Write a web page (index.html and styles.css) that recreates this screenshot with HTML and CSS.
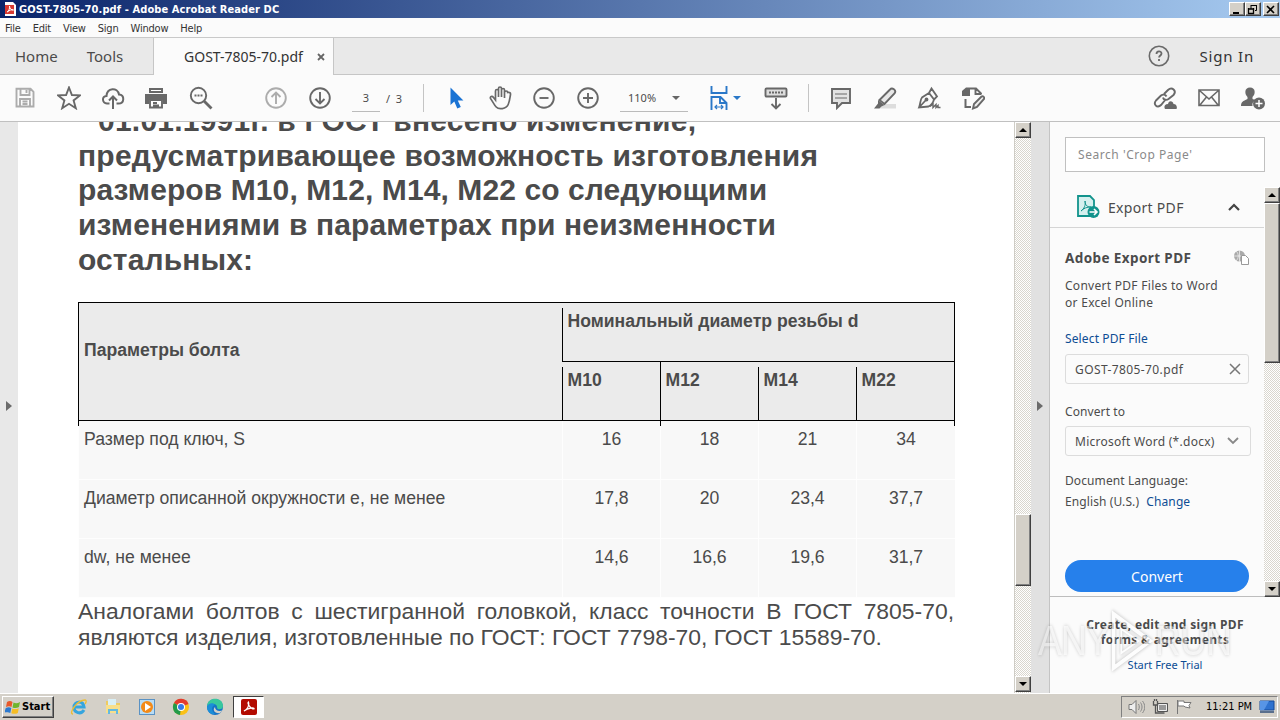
FILE: index.html
```html
<!DOCTYPE html>
<html lang="en">
<head>
  <meta charset="UTF-8" />
  <meta name="viewport" content="width=device-width, initial-scale=1.0" />
  <title>GOST-7805-70.pdf - Adobe Acrobat Reader DC</title>
  <link rel="stylesheet" href="styles.css">
</head>
<body>
  <header class="titlebar">
    <svg class="app-icon" width="13" height="14" viewBox="0 0 13 14"><path d="M1 0h8l3 3v11H1z" fill="#fff"/><path d="M1 3h9v9H1z" fill="#d93a32"/><path d="M3 10c2-1 3-4 2.500-6 0 3 2 4 4 4-2-.5-4 0-6 2" fill="none" stroke="#fff"/></svg>
    <span class="title">GOST-7805-70.pdf - Adobe Acrobat Reader DC</span>
    <div class="win-buttons">
      <button class="win"><svg width="13" height="11"><path d="M3 9h6" stroke="#000" stroke-width="2"/></svg></button>
      <button class="win"><svg width="13" height="11"><path d="M5 1.500h6M5 1v4M10.500 1v5.500H9" fill="none" stroke="#000"/><path d="M2 5h6M2.500 4v5.500h5V4" fill="none" stroke="#000" stroke-width="1.300"/></svg></button>
      <button class="win close"><svg width="13" height="11"><path d="M3 2l7 7M10 2L3 9" stroke="#000" stroke-width="1.600"/></svg></button>
    </div>
  </header>

  <nav class="menu">
    <span>File</span><span>Edit</span><span>View</span><span>Sign</span><span>Window</span><span>Help</span>
  </nav>

  <div class="tabs">
    <div class="tab-left"><span>Home</span><span>Tools</span></div>
    <div class="tab-active"><span>GOST-7805-70.pdf</span><svg width="8" height="8"><path d="M1 1l6 6M7 1L1 7" stroke="#666" stroke-width="1.800"/></svg></div>
    <div class="tab-right">
      <svg width="22" height="22" viewBox="0 0 22 22"><circle cx="11" cy="11" r="9.700" fill="none" stroke="#6a6a6a" stroke-width="1.600"/><path d="M8.500 9c0-3.500 5-3.300 5-.5 0 2-2.400 2-2.400 4M11 14v2" fill="none" stroke="#6a6a6a" stroke-width="1.800"/></svg>
      <span>Sign In</span>
    </div>
  </div>

  <div class="toolbar">
    <div class="tools files">
      <svg class="icon off" viewBox="0 0 24 24"><path d="M3.500 2.800h14l3 3v14.700h-17zM7.500 3v6h9V3M13.500 4v3M7 20v-7h10v7M9.500 15.500h5M9.500 18h5"/></svg>
      <svg class="icon" viewBox="0 0 24 24"><path d="M12 1.500l2.900 7.500 8 .4-6.300 5 2.200 7.800L12 17.800l-6.800 4.400 2.200-7.800-6.300-5 8-.4z"/></svg>
      <svg class="icon" viewBox="0 0 24 24"><path d="M8.500 17.500H6C1 17 .5 10.500 5.500 10 6 1.500 16.500 1 18 8.500c6 .5 5.500 9-.5 9h-2M12 23V11M8 14.500l4-4 4 4" stroke-width="2"/></svg>
      <svg class="icon" viewBox="1 0 24 24"><path class="solid" d="M5 2h14v5H5zM1 8h22v10h-4v-4H5v4H1z"/><path d="M6 14h12v7.500H6zM9 17h4M9 19.500h6" fill="#fff"/><path d="M6 3h12v3H6z" fill="#fff"/></svg>
      <svg class="icon" viewBox="0 0 24 24"><circle cx="9.500" cy="9.500" r="7.700"/><path d="M15 15l7.500 7.500" stroke-width="2.800"/><path d="M5.500 9.500h8" stroke-width="2" stroke-dasharray="2 1"/></svg>
    </div>
    <div class="tools pages">
      <svg class="icon off" viewBox="0 0 24 24"><circle cx="12" cy="12" r="9.800"/><path d="M12 18V7M7.500 11L12 6.500l4.500 4.500"/></svg>
      <svg class="icon" viewBox="0 0 24 24"><circle cx="12" cy="12" r="9.800"/><path d="M12 6v11M7.500 13l4.500 4.500 4.500-4.500"/></svg>
      <span class="page-no">3</span>
    </div>
    <span class="page-count">/&nbsp; 3</span>
    <i class="sep"></i>
    <div class="tools view">
      <svg class="icon" viewBox="0 0 24 24"><path d="M6.500 1.500v17.500l3.800-3.600 3 7 3.500-1.300-3-6.600h5.600z" fill="#1a73d4" stroke="none"/></svg>
      <svg class="icon" viewBox="0 0 24 24"><path stroke-width="1.700" d="M7.500 14V5c0-2 3-2 3 0v6-8.500c0-2 3-2 3 0V11 4c0-2 3-2 3 0v8-5.500c0-2 3.200-2 3.200 0v0c2-.5 3 .5 2.800 2-.5 3-.9 7-2.300 10-2 4.700-9.500 5.300-12 2.500-2-2-3.500-5.500-5.700-8.500-.8-2 1.600-3 3-1z"/></svg>
      <svg class="icon" viewBox="0 0 24 24"><circle cx="12" cy="12" r="9.800"/><path d="M7.500 12h9"/></svg>
      <svg class="icon" viewBox="0 0 24 24"><circle cx="12" cy="12" r="9.800"/><path d="M7 12h10M12 7v10"/></svg>
      <span class="zoom">110%<i class="caret"></i></span>
    </div>
    <svg class="icon fit" viewBox="0 0 24 24"><path d="M4.500 0v7h15V0M4.500 24V11h9l6 6v7M13 11v6h6"/><path d="M8 21h8M10 19l-2 2 2 2M14 19l2 2-2 2" stroke-width="1.200"/></svg>
    <i class="caret blue"></i>
    <svg class="icon keys" viewBox="0 0 24 24"><rect x="1.500" y="2.500" width="21" height="8" rx="1" fill="#ddd"/><path d="M5 6.500h14" stroke-dasharray="2 1"/><path d="M12 12v10M7.500 18l4.500 4.500 4.500-4.500"/></svg>
    <i class="sep"></i>
    <div class="tools edit">
      <svg class="icon" viewBox="0 0 24 24"><path d="M3 3h18v14h-8l-5 5v-5H3z" fill="#e2e2e2"/><path d="M6 8h12M6 12h12" stroke-width="1.200"/></svg>
      <svg class="icon" viewBox="0 0 24 24"><path d="M11 18h12v4.500H7z" fill="#ddd" stroke="none"/><path d="M6.500 14L17 3.500c2-2.500 7 .5 4.500 4L11.500 18l-5-4z" fill="#e7e7e7"/><path class="solid" d="M5 14l6.500 5-3 1.500-2 2H1l4-5z"/></svg>
      <svg class="icon" viewBox="0 0 24 24"><path d="M2 21.500C3.500 18 3 14 5 11.500L12 7l5 6.500c-1 3.500-3 6-5.500 7zM2 21.500l6.500-7M12 7l2.500-4.500 5.500 8-3 3" stroke-width="1.800"/><circle cx="9.500" cy="13.500" r="1"/><path d="M13 20.500l3-2.500v3.500l3-3v3l2-2v2h2.500" stroke-width="1.400"/></svg>
      <svg class="icon" viewBox="0 0 24 24"><path class="solid" d="M1 5l4-3.500h4V10H1z"/><path d="M9 2.500h6l5 5v1M14.500 3v5H20" /><path d="M4.500 13v8H10" stroke-width="2"/><path d="M12 22.500l1-4.500 7.500-7.500c1.500-1 3.500 1 2.500 2.500L16 21z" fill="#eee"/></svg>
    </div>
    <div class="share">
      <svg class="icon" viewBox="0 0 24 24"><path d="M11 8l4-4c4-4 9 1 5.500 5l-5 4c-2 1.500-5 1-5.500-1.500M13 13l-5 6c-4 4-8-1-5-4.500l5-5c2-1.500 4.500-1 5.500 1"/><path class="solid" d="M12 23c-2-4 2-5 3-5 1-4 5-3 5.500 0 3 0 4 3 3 5z"/></svg>
      <svg class="icon" viewBox="0 0 24 24"><path d="M2 4h20v15.500H2zM2.500 4.500L12 13l9.500-8.500M3 19l6.500-8M21 19l-6.500-8" stroke-width="1.600"/></svg>
      <svg class="icon" viewBox="0 0 24 24"><path class="solid" d="M9 1.500c6 0 5.500 7 2.500 9.500v2l3.500 1.500c-3 1-4 2.500-3.500 5.500H0c0-4 2-5 6.500-7v-2C3.500 8.500 3 1.500 9 1.500z"/><circle class="solid" cx="18" cy="17.500" r="6"/><path d="M18 14v7M14.500 17.500h7" stroke="#fff" stroke-width="1.500"/></svg>
    </div>
  </div>

  <main class="workspace">
    <aside class="left-rail"><i class="arrow"></i></aside>

    <article class="page">
      <h1>
        <span class="l1">01.01.1991г. в ГОСТ внесено изменение,</span>
        <span class="l2">предусматривающее возможность изготовления</span>
        <span class="l3">размеров М10, М12, М14, М22 со следующими</span>
        <span class="l4">изменениями в параметрах при неизменности</span>
        <span class="l5">остальных:</span>
      </h1>
      <div class="bolts">
        <div class="th params">Параметры болта</div>
        <div class="th diameter">Номинальный диаметр резьбы d</div>
        <div class="th short">М10</div>
        <div class="th full">М12</div>
        <div class="th short">М14</div>
        <div class="th short last">М22</div>
        <div class="td name">Размер под ключ, S</div><div class="td">16</div><div class="td">18</div><div class="td">21</div><div class="td">34</div>
        <div class="td name">Диаметр описанной окружности е, не менее</div><div class="td">17,8</div><div class="td">20</div><div class="td">23,4</div><div class="td">37,7</div>
        <div class="td name">dw, не менее</div><div class="td">14,6</div><div class="td">16,6</div><div class="td">19,6</div><div class="td">31,7</div>
      </div>
      <p class="analogs">
        <span class="a1">Аналогами болтов с шестигранной головкой, класс точности В ГОСТ 7805-70,</span>
        <span class="a2">являются изделия, изготовленные по ГОСТ: ГОСТ 7798-70, ГОСТ 15589-70.</span>
      </p>
    </article>

    <div class="scrollbar doc-scroll">
      <button class="up"></button>
      <div class="thumb"></div>
      <button class="down"></button>
    </div>
    <div class="right-rail"><i class="arrow"></i></div>

    <aside class="panel">
      <div class="search">Search 'Crop Page'</div>
      <div class="panel-body">
        <div class="export">
          <div class="export-head">
            <svg width="24" height="24" viewBox="0 0 24 24"><path d="M2 1h12l4 4v16H2z" fill="#d5f0ee" stroke="#12938c" stroke-width="1.800"/><path d="M5 16c3-2 5-6 4-10 0 5 3 6 6 6-4 0-7 1-10 4" fill="none" stroke="#12938c"/><circle cx="17.500" cy="17" r="6" fill="#12938c"/><path d="M13.500 17h7M18 14l3 3-3 3" fill="none" stroke="#fff" stroke-width="1.600"/></svg>
            <span>Export PDF</span>
            <svg class="chev" width="14" height="10"><path d="M2 8l5-5 5 5" fill="none" stroke="#444" stroke-width="2.200"/></svg>
          </div>
          <div class="export-form">
            <div class="row-title"><b>Adobe Export PDF</b>
              <svg width="17" height="16" viewBox="0 0 17 16"><circle cx="6.500" cy="6" r="5.500" fill="#aaa"/><path d="M1 6h11M6.500 0v12M3 1c3 3 3 7 0 10" fill="none" stroke="#eee" stroke-width=".8"/><path d="M8.500 5.500h4l3 3v6h-7z" fill="#fff" stroke="#999"/></svg>
            </div>
            <p class="desc">Convert PDF Files to Word<br>or Excel Online</p>
            <a class="select-file">Select PDF File</a>
            <div class="field file"><span>GOST-7805-70.pdf</span><svg width="12" height="12"><path d="M1 1l10 10M11 1L1 11" stroke="#777" stroke-width="1.500"/></svg></div>
            <label>Convert to</label>
            <div class="field format"><span>Microsoft Word (*.docx)</span><svg width="12" height="8"><path d="M1 1l5 5 5-5" fill="none" stroke="#888" stroke-width="1.800"/></svg></div>
            <p class="lang">Document Language:<br>English (U.S.) <a>Change</a></p>
            <button class="convert">Convert</button>
          </div>
        </div>
        <div class="scrollbar panel-scroll">
          <button class="up"></button>
          <div class="thumb"></div>
          <button class="down"></button>
        </div>
      </div>
      <div class="trial">
        <b>Create, edit and sign PDF<br>forms &amp; agreements</b>
        <a>Start Free Trial</a>
      </div>
    </aside>

    <div class="watermark"><span class="any">ANY</span><svg width="54" height="64" viewBox="0 0 54 64"><path d="M6 5l43 27L6 59z" fill="none" stroke="#fff" stroke-width="4"/><path d="M15 20l20 12-20 12z" fill="none" stroke="#fff" stroke-width="2"/></svg><span>RUN</span></div>
  </main>

  <footer class="taskbar">
    <button class="start">
      <svg width="16" height="15" viewBox="0 0 16 15"><path d="M2 2c2-1.500 4-1.300 5.500 0L6.500 7C5 6 3 6 1 7z" fill="#e8592a"/><path d="M8.500 2.500c2 1 4 1 6.500-.5L14 7c-2 1.200-4.500 1.200-6.500.4z" fill="#6fb52c"/><path d="M.8 8c2-1 4-1 5.500 0l-1 5C4 12-1 12-1 13z" fill="#2c79cf"/><path d="M7.300 8.500c2 1 4.200.7 6.500-.3l-1 4.800c-2 1.200-4.500 1-6.500.2z" fill="#f6bd24"/></svg>
      <span>Start</span>
    </button>
    <div class="quick">
      <svg width="18" height="18" viewBox="0 0 18 18"><path d="M14 12c-3 5-10 3-10-3s9-7 10 0H5" fill="none" stroke="#35a5de" stroke-width="3"/><path d="M3 16C-2 16 7 2 15 2c2 0 1 3 0 4" fill="none" stroke="#edbd32" stroke-width="1.300"/></svg>
      <svg width="18" height="18" viewBox="0 0 18 18"><path d="M2 3h5l1 2h8v10H2z" fill="#eecb61"/><path d="M4 1h8v6H4z" fill="#d9eff5"/><path d="M2 7h14v8H2z" fill="#f8df8b"/><path d="M4 16v-5h10v5h-2v-3H6v3z" fill="#64b9e0"/></svg>
      <svg width="18" height="18" viewBox="0 0 18 18"><rect x="1.500" y="1.500" width="15" height="15" fill="#b8dcf5" stroke="#5a92c4"/><circle cx="9" cy="9" r="6" fill="#f38a18"/><path d="M7 5l6 4-6 4z" fill="#fff"/></svg>
      <svg width="18" height="18" viewBox="0 0 18 18"><circle cx="9" cy="9" r="8" fill="#fbc116"/><path d="M9 9L2 5a8 8 0 0 1 14.500 1z" fill="#e33b2e"/><path d="M9 9l-7-4a8 8 0 0 0 6 12z" fill="#229a4a"/><circle cx="9" cy="9" r="4" fill="#fff"/><circle cx="9" cy="9" r="3" fill="#367be8"/></svg>
      <svg width="18" height="18" viewBox="0 0 18 18"><circle cx="9" cy="9" r="8" fill="#1673c6"/><path d="M1 8C2-2 17-1 17 8c0 4-5 4-6 2 1-4-5-6-10-2z" fill="#38c79d"/><path d="M17 12c-3 2-8 1-8-3-3 3 0 7 5 6z" fill="#d4d0c8"/><path d="M1 9c1-4 6-5 8-2-4 1-4 6 0 9-5 1-8-3-8-7z" fill="#1b8ed8"/></svg>
    </div>
    <div class="running"><svg width="16" height="16" viewBox="0 0 16 16"><rect width="16" height="16" rx="2" fill="#b30b00"/><path d="M3 12c3-1 6-6 4.500-9C6 4 9 10 13 10c1-2-6-1-10 2z" fill="none" stroke="#fff" stroke-width="1.200"/></svg></div>
    <div class="tray">
      <svg width="17" height="16" viewBox="0 0 17 16"><path d="M1 5.500h3l4-4v13l-4-4H1z" fill="#eee" stroke="#777"/><path d="M10.500 5c1 2 1 4 0 6M12.500 3.500c2 3 2 6 0 9M14.500 2c3 4 3 8 0 12" fill="none" stroke="#888"/></svg>
      <svg width="17" height="16" viewBox="0 0 17 16"><path d="M5.500 4.500h10v8h-10z" fill="#999" stroke="#555"/><path d="M6.500 5.500h8v6h-8z" fill="none" stroke="#eee"/><path d="M1.500 2v4h4V2M3.500 6v8h9M2.500 0v2M4.500 0v2" fill="none" stroke="#555" stroke-width="1.300"/></svg>
      <svg width="17" height="16" viewBox="0 0 17 16"><path d="M1.500 1v14M2 2h6v1.500h7l-2 3 1 2.500-5-1-1-1H2z" fill="#fff" stroke="#777"/></svg>
      <span>11:21 PM</span>
      <svg width="16" height="14" viewBox="0 0 16 14"><path d="M1 1h14v9H1z" fill="#2f72cf" stroke="#174a98"/><path d="M1 1h9L5 10H1z" fill="#5895e6"/><path d="M1 12h14" stroke="#5a6f8d" stroke-width="2"/></svg>
    </div>
  </footer>
</body>
</html>
```
FILE: styles.css
```css
:root {
  --chrome: #d4d0c8;
  --ink: #4b4b4b;
  --link: #0d4d94;
  --ui: "Noto Sans", sans-serif;
  --win: "DejaVu Sans Condensed", "DejaVu Sans", sans-serif;
  --hatch: repeating-conic-gradient(#d9d6ce 0% 25%, #fff 0% 50%) 0 0 / 2px 2px;
}

* {
  box-sizing: border-box;
}

body {
  margin: 0;
  width: 1280px;
  height: 720px;
  overflow: hidden;
  display: flex;
  flex-direction: column;
  background: #fbfbfb;
  color: var(--ink);
  font-family: var(--ui);
}

svg {
  display: block;
  flex: none;
}

button {
  border: none;
  padding: 0;
  font: inherit;
}

/* window frame */
.titlebar {
  height: 18px;
  display: flex;
  align-items: center;
  padding: 0 1px 0 4px;
  background: linear-gradient(to right, #0a246a, #a6caf0);
}

.title {
  margin-left: 2px;
  font: bold 11px/17px var(--win);
  letter-spacing: .1px;
  color: #fff;
}

.win-buttons {
  margin-left: auto;
  display: flex;
}

.win, .up, .down, .thumb {
  background: var(--chrome);
  border: 1px solid;
  border-color: #fff #404040 #404040 #fff;
  box-shadow: inset -1px -1px #808080;
}

.win {
  width: 16px;
  height: 14px;
}

.win.close {
  margin-left: 2px;
}

.menu {
  height: 20px;
  display: flex;
  gap: 12px;
  padding-left: 5px;
  border-bottom: 1px solid #c9c9c9;
  font: 11px/21px var(--win);
  letter-spacing: -.2px;
  color: #333;
}

.tabs {
  height: 37px;
  display: flex;
  background: #e9e9e9;
  font-size: 15px;
  line-height: 36px;
}

.tab-left {
  width: 154px;
  display: flex;
  gap: 29px;
  padding-left: 15px;
  border-right: 1px solid #c6c6c6;
  border-bottom: 1px solid #c6c6c6;
}

.tab-active {
  width: 179px;
  display: flex;
  align-items: center;
  padding-left: 30px;
  gap: 14px;
  background: #fbfbfb;
  font-size: 14px;
  color: #333;
}

.tab-right {
  flex: 1;
  display: flex;
  align-items: center;
  justify-content: flex-end;
  gap: 30px;
  padding-right: 26px;
  border-left: 1px solid #c6c6c6;
  border-bottom: 1px solid #c6c6c6;
  letter-spacing: .8px;
  color: #333;
}

/* toolbar */
.toolbar {
  height: 47px;
  display: flex;
  align-items: center;
  padding-left: 13px;
  border-bottom: 1px solid #c0c0c0;
  font-size: 11px;
}

.icon {
  width: 24px;
  height: 24px;
  fill: none;
  stroke: #686868;
  stroke-width: 1.900;
}

.icon .solid {
  fill: #686868;
  stroke: none;
}

.off {
  stroke: #acacac;
}

.tools {
  display: flex;
  align-items: center;
  gap: 20px;
}

.pages {
  margin-left: 51px;
}

.page-no, .zoom {
  width: 28px;
  height: 27px;
  border-bottom: 1px solid #bbb;
  text-align: center;
  line-height: 26px;
}

.page-count {
  width: 43px;
  padding-left: 6px;
}

.sep {
  width: 1px;
  height: 28px;
  background: #c4c4c4;
}

.view {
  margin-left: 20px;
}

.zoom {
  width: 68px;
  display: flex;
  align-items: center;
  justify-content: space-between;
  padding: 0 8px;
}

.caret {
  border: 4px solid transparent;
  border-top-color: #666;
  border-bottom: none;
}

.caret.blue {
  margin-left: 2px;
  border-top-color: #2a78c8;
}

.fit {
  margin-left: 19px;
  stroke: #2a78c8;
}

.keys {
  margin: 0 20px 0 23px;
}

.edit {
  margin-left: 20px;
}

.share {
  display: flex;
  gap: 20px;
  margin: 0 15px 0 auto;
}

/* document area */
.workspace {
  position: relative;
  height: 571px;
  display: flex;
}

.left-rail, .right-rail {
  width: 18px;
  display: flex;
  align-items: center;
  justify-content: center;
  padding-bottom: 3px;
  background: #e8e8e8;
}

.right-rail {
  width: 19px;
  background: #e1e1e1;
  border-right: 1px solid #c4c4c4;
}

.arrow {
  border: 5px solid transparent;
  border-left: 6px solid #6b6b6b;
  border-right: none;
}

.page {
  width: 996px;
  padding-left: 60px;
  overflow: hidden;
  background: #fff;
  font-family: "Liberation Sans", Arial, sans-serif;
}

h1 {
  margin: -18px 0 0;
  font-size: 30px;
  line-height: 34.700px;
  letter-spacing: .13px;
}

h1 span {
  display: block;
  white-space: nowrap;
}

h1 .l1 {
  padding-left: 20px;
  letter-spacing: .23px;
}

h1 .l2 {
  letter-spacing: .22px;
}

h1 .l3 {
  letter-spacing: .1px;
}

.bolts {
  width: 877px;
  margin-top: 24px;
  display: grid;
  grid-template-columns: 484px repeat(3, 98px) 99px;
  grid-auto-rows: 59px;
  border-top: 1px solid #000;
  font-size: 17.600px;
  line-height: 20px;
}

.th {
  padding: 8px 0 0 5.500px;
  background: #ebebeb;
  border-bottom: 1px solid #000;
  font-weight: bold;
  position: relative;
}

.th::before {
  content: "";
  position: absolute;
  left: 0;
  top: 5px;
  bottom: 0;
  width: 1px;
  background: #000;
}

.params {
  grid-row: span 2;
  padding: 37px 0 0 6px;
}

.diameter {
  grid-column: span 4;
}

.params::before, .full::before {
  top: 0;
  bottom: -6px;
  z-index: 1;
}

.diameter, .last {
  border-right: 1px solid #000;
}

.last::after {
  content: "";
  position: absolute;
  right: -1px;
  bottom: -6px;
  width: 1px;
  height: 6px;
  background: #000;
}

.td {
  padding-top: 8px;
  background: #f8f8f8;
  border-left: 1px solid #fefefe;
  border-bottom: 1px solid #fefefe;
  text-align: center;
}

.name {
  padding-left: 5px;
  text-align: left;
}

.analogs {
  width: 876px;
  margin: 0;
  font-size: 22.900px;
  line-height: 26px;
}

.analogs span {
  display: block;
  white-space: nowrap;
}

.a1 {
  text-align-last: justify;
}

/* scrollbars */
.scrollbar {
  width: 17px;
  display: flex;
  flex-direction: column;
  background: var(--hatch);
}

.up, .down {
  height: 16px;
  display: flex;
  align-items: center;
  justify-content: center;
}

.up::before, .down::before {
  content: "";
  border: 4px solid transparent;
  border-top: none;
  border-bottom-color: #000;
}

.down {
  margin-top: auto;
}

.down::before {
  transform: scaleY(-1);
}

.doc-scroll {
  border-left: 1px solid #cfcdc6;
  padding-bottom: 1px;
}

.doc-scroll .thumb {
  margin-top: 376px;
  height: 72px;
}

/* tools panel */
.panel {
  width: 230px;
  display: flex;
  flex-direction: column;
  background: #fbfbfb;
  font-size: 12px;
}

.panel a {
  color: var(--link);
}

.search {
  width: 200px;
  height: 35px;
  margin: 15px 0 15px 15px;
  padding-left: 12px;
  border: 1px solid #c0c0c0;
  background: #fff;
  color: #8a8a8a;
  line-height: 34px;
  letter-spacing: .55px;
}

.panel-body {
  height: 410px;
  display: flex;
}

.export {
  width: 214px;
}

.export-head {
  height: 41px;
  display: flex;
  align-items: center;
  padding-left: 26px;
  border-bottom: 1px solid #d5d5d5;
  font-size: 14px;
  letter-spacing: .3px;
}

.export-head span {
  margin-left: 8px;
}

.chev {
  margin: 0 23px 0 auto;
}

.export-form {
  height: 369px;
  padding: 20px 0 0 15px;
  border-bottom: 1px solid #bdbdbd;
  display: flex;
  flex-direction: column;
  align-items: flex-start;
}

.row-title {
  width: 185px;
  display: flex;
  align-items: center;
  justify-content: space-between;
  font-size: 13.500px;
  line-height: 20px;
  letter-spacing: .4px;
}

.desc {
  margin: 9px 0 19px;
  line-height: 17px;
  letter-spacing: .28px;
}

.select-file {
  line-height: 17px;
  letter-spacing: .13px;
}

.field {
  width: 184px;
  height: 30px;
  display: flex;
  align-items: center;
  justify-content: space-between;
  padding: 0 7px 0 9px;
  border: 1px solid #dcdcdc;
  border-radius: 3px;
  white-space: nowrap;
}

.file {
  margin: 7px 0 19px;
  letter-spacing: .4px;
}

label {
  line-height: 17px;
  letter-spacing: .1px;
}

.format {
  width: 186px;
  margin: 6px 0 14px;
  padding-right: 11px;
  letter-spacing: .27px;
}

.lang {
  margin: 0;
  line-height: 21px;
  letter-spacing: .1px;
}

.lang a {
  margin-left: 4px;
}

.convert {
  width: 184px;
  height: 32px;
  margin-top: 48px;
  flex: none;
  border-radius: 16px;
  background: #2680eb;
  color: #fff;
  font-size: 14px;
}

.panel-scroll {
  width: 16px;
}

.panel-scroll .thumb {
  height: 160px;
}

.trial {
  display: flex;
  flex-direction: column;
  align-items: center;
  padding-top: 20px;
  line-height: 15px;
  text-align: center;
}

.trial b {
  letter-spacing: .33px;
}

.trial a {
  margin-top: 10px;
  font-size: 11px;
}

/* lies over the trial banner */
.watermark {
  position: absolute;
  left: 1038px;
  top: 487px;
  display: flex;
  align-items: center;
  color: rgba(255, 255, 255, .7);
  font: 42px/64px "Liberation Sans", Arial, sans-serif;
  filter: drop-shadow(0 0 2px rgba(0, 0, 0, .4));
  opacity: .65;
  transform: scaleX(.85);
  transform-origin: 0 0;
}

.any {
  letter-spacing: -1px;
}

/* taskbar */
.taskbar {
  height: 27px;
  display: flex;
  align-items: center;
  padding: 0 2px;
  background: var(--chrome);
  border-top: 1px solid #fff;
  font: 11px/20px var(--win);
  color: #000;
}

.start {
  width: 52px;
  height: 22px;
  display: flex;
  align-items: center;
  gap: 1px;
  padding-left: 2px;
  background: var(--chrome);
  border: 1px solid;
  border-color: #fff #404040 #404040 #fff;
  box-shadow: inset -1px -1px #808080;
  font-weight: bold;
}

.quick {
  display: flex;
  gap: 16px;
  margin-left: 16px;
}

.running {
  width: 31px;
  height: 22px;
  margin-left: 9px;
  display: flex;
  align-items: center;
  justify-content: center;
  background: #fff;
  border: 1px solid;
  border-color: #404040 #fff #fff #404040;
}

.tray {
  width: 157px;
  height: 22px;
  margin-left: auto;
  display: flex;
  align-items: center;
  gap: 7px;
  padding-left: 6px;
  border: 1px solid;
  border-color: #808080 #fff #fff #808080;
}

.tray span {
  margin-left: 6px;
  white-space: nowrap;
}
```
